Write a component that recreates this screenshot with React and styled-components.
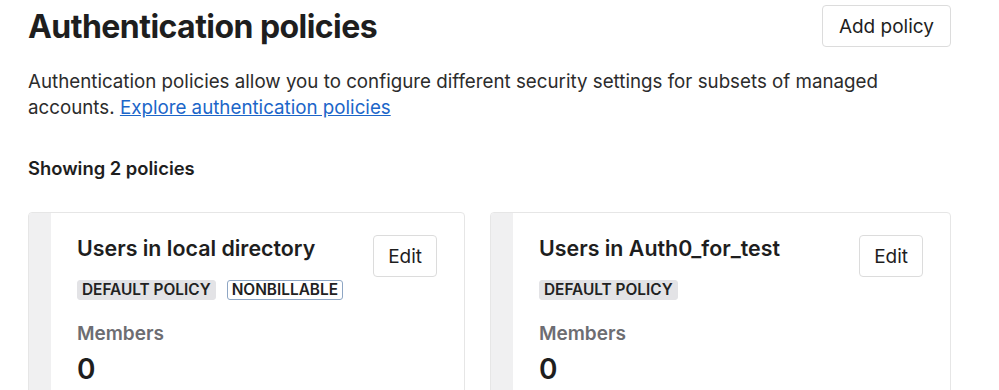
import React from "react";
import styled, { createGlobalStyle } from "styled-components";

const Global = createGlobalStyle`
  html, body { margin: 0; padding: 0; background: #fff; }
  body { font-family: Inter, "Noto Sans", sans-serif; color: #1f1f1f; }
  * { box-sizing: border-box; }
`;

const Page = styled.div`
  width: 923px;
  height: 390px;
  overflow: hidden;
  margin-left: 28px;
  padding-top: 5px;
`;

const Header = styled.div`
  display: flex;
  justify-content: space-between;
  align-items: center;
  height: 42px;
`;

const Title = styled.h1`
  margin: 0;
  font-size: 32px;
  font-weight: 700;
  letter-spacing: -0.55px;
  color: #1e1e1e;
`;

const Button = styled.button`
  font-family: inherit;
  font-size: 19px;
  color: #1e1e1e;
  background: #fff;
  border: 1px solid #dcdcdc;
  border-radius: 4px;
  height: 42px;
  margin-top: ${(p) => (p.$small ? 2 : 0)}px;
  padding: 0 ${(p) => (p.$small ? 14 : 16)}px;
  cursor: pointer;
`;

const Description = styled.p`
  margin: 22px 0 0;
  font-size: 18.75px;
  line-height: 26px;
  color: #2c2c2c;
`;

const Link = styled.a`
  color: #1c66c9;
  text-decoration: underline;
`;

const Count = styled.div`
  margin-top: 36px;
  font-size: 18.4px;
  font-weight: 600;
  color: #1e1e1e;
`;

const Cards = styled.div`
  display: grid;
  grid-template-columns: 437px 461px;
  gap: 25px;
  margin-top: 33px;
`;

const Card = styled.div`
  display: flex;
  border: 1px solid #e6e6e6;
  border-radius: 4px;
  overflow: hidden;
  height: 200px;
  background: #fff;
`;

const Strip = styled.div`
  width: 22px;
  background: #f0f0f1;
  flex-shrink: 0;
`;

const CardBody = styled.div`
  flex: 1;
  padding: 20px 27px 0 26px;
`;

const CardTop = styled.div`
  display: flex;
  justify-content: space-between;
  align-items: flex-start;
`;

const CardTitle = styled.h2`
  margin: 0;
  font-size: 21.4px;
  font-weight: 600;
  color: #1e1e1e;
  line-height: 30px;
`;

const Badges = styled.div`
  display: flex;
  gap: 11px;
  margin-top: 17px;
`;

const Badge = styled.span`
  font-size: 15.4px;
  font-weight: 600;
  line-height: 18px;
  padding: 0 4px;
  border-radius: 3px;
  color: #222;
  background: ${(p) => (p.$outline ? "#fff" : "#e3e3e6")};
  border: 1px solid ${(p) => (p.$outline ? "#8ea6c4" : "#e3e3e6")};
`;

const Label = styled.div`
  margin-top: 22px;
  font-size: 19px;
  font-weight: 600;
  color: #6d6d72;
`;

const Value = styled.div`
  margin-top: 7px;
  font-size: 28px;
  font-weight: 600;
  color: #1e1e1e;
`;

const policies = [
  { name: "Users in local directory", badges: ["DEFAULT POLICY", "NONBILLABLE"], members: 0 },
  { name: "Users in Auth0_for_test", badges: ["DEFAULT POLICY"], members: 0 },
];

export default function App() {
  return (
    <>
      <Global />
      <Page>
        <Header>
          <Title>Authentication policies</Title>
          <Button>Add policy</Button>
        </Header>
        <Description>
          Authentication policies allow you to configure different security settings for subsets of managed
          accounts. <Link href="#">Explore authentication policies</Link>
        </Description>
        <Count>Showing 2 policies</Count>
        <Cards>
          {policies.map((p) => (
            <Card key={p.name}>
              <Strip />
              <CardBody>
                <CardTop>
                  <div>
                    <CardTitle>{p.name}</CardTitle>
                    <Badges>
                      {p.badges.map((b) => (
                        <Badge key={b} $outline={b === "NONBILLABLE"}>{b}</Badge>
                      ))}
                    </Badges>
                  </div>
                  <Button $small>Edit</Button>
                </CardTop>
                <Label>Members</Label>
                <Value>{p.members}</Value>
              </CardBody>
            </Card>
          ))}
        </Cards>
      </Page>
    </>
  );
}
